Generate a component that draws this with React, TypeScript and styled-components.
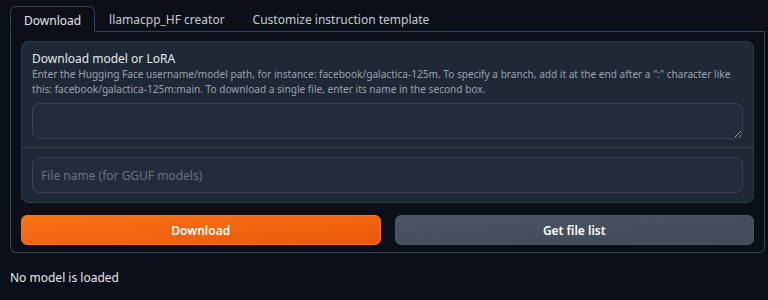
import React from "react";
import styled, { createGlobalStyle } from "styled-components";

const GlobalStyle = createGlobalStyle`
  html, body {
    margin: 0;
    padding: 0;
    background: #0b0f19;
    font-family: "Noto Sans", "Open Sans", sans-serif;
    color: #e5e7eb;
  }
`;

const Page = styled.div`
  padding: 6px 3px 0 10px;
  width: 768px;
  box-sizing: border-box;
`;

const TabBar = styled.div`
  display: flex;
  align-items: flex-end;
  height: 26px;
  border-bottom: 1px solid #374151;
  box-sizing: border-box;
`;

const Tab = styled.button<{ $active?: boolean }>`
  height: ${(p) => (p.$active ? "26px" : "25px")};
  padding: 2px 13px 0;
  margin-bottom: ${(p) => (p.$active ? "-1px" : "0")};
  font-family: inherit;
  font-size: 12px;
  color: ${(p) => (p.$active ? "#e5e7eb" : "#c6cbd2")};
  background: ${(p) => (p.$active ? "#0b0f19" : "transparent")};
  border: 1px solid ${(p) => (p.$active ? "#374151" : "transparent")};
  border-bottom-color: ${(p) => (p.$active ? "#0b0f19" : "transparent")};
  border-radius: 6px 6px 0 0;
  cursor: pointer;
`;

const Panel = styled.div`
  border: 1px solid #374151;
  border-top: none;
  border-radius: 0 0 6px 6px;
  padding: 9px 10px 7px;
  display: flex;
  flex-direction: column;
  gap: 12px;
`;

const Block = styled.div`
  background: #1f2835;
  border: 1px solid #2f3845;
  border-radius: 7px;
  display: flex;
  flex-direction: column;
`;

const Field = styled.div<{ $divider?: boolean }>`
  padding: ${(p) => (p.$divider ? "9px 10px 9px" : "8px 10px 8px")};
  border-top: ${(p) => (p.$divider ? "1px solid #2f3845" : "none")};
  display: flex;
  flex-direction: column;
`;

const Title = styled.div`
  font-size: 12px;
  color: #e5e7eb;
  line-height: 17px;
`;

const Info = styled.div`
  font-size: 10.1px;
  line-height: 15px;
  color: #9ca3af;
  margin-bottom: 6px;
`;

const TextArea = styled.textarea`
  height: 36px;
  box-sizing: border-box;
  background: #222c3a;
  border: 1px solid #374151;
  border-radius: 7px;
  resize: vertical;
  color: #e5e7eb;
  font-family: inherit;
  outline: none;
`;

const Input = styled.input`
  height: 36px;
  box-sizing: border-box;
  background: #222c3a;
  border: 1px solid #374151;
  border-radius: 7px;
  padding: 0 8px;
  color: #e5e7eb;
  font-family: inherit;
  font-size: 12px;
  outline: none;
  &::placeholder {
    color: #6b7280;
  }
`;

const ButtonRow = styled.div`
  display: grid;
  grid-template-columns: 1fr 1fr;
  gap: 14px;
`;

const Button = styled.button<{ $primary?: boolean }>`
  height: 30px;
  border-radius: 6px;
  border: 1px solid ${(p) => (p.$primary ? "#f97316" : "#4b5563")};
  background: ${(p) =>
    p.$primary
      ? "linear-gradient(to bottom right, #f97316, #ea580c)"
      : "linear-gradient(to bottom right, #4b5563, #404a58)"};
  color: #fff;
  font-family: inherit;
  font-size: 12px;
  font-weight: 600;
  cursor: pointer;
`;

const Status = styled.div`
  margin-top: 16px;
  font-size: 12px;
  color: #e5e7eb;
`;

export default function App() {
  return (
    <>
      <GlobalStyle />
      <Page>
        <TabBar>
          <Tab $active>Download</Tab>
          <Tab>llamacpp_HF creator</Tab>
          <Tab>Customize instruction template</Tab>
        </TabBar>
        <Panel>
          <Block>
            <Field>
              <Title>Download model or LoRA</Title>
              <Info>
                Enter the Hugging Face username/model path, for instance: facebook/galactica-125m. To specify a
                branch, add it at the end after a ":" character like this: facebook/galactica-125m:main. To
                download a single file, enter its name in the second box.
              </Info>
              <TextArea />
            </Field>
            <Field $divider>
              <Input placeholder="File name (for GGUF models)" />
            </Field>
          </Block>
          <ButtonRow>
            <Button $primary>Download</Button>
            <Button>Get file list</Button>
          </ButtonRow>
        </Panel>
        <Status>No model is loaded</Status>
      </Page>
    </>
  );
}
